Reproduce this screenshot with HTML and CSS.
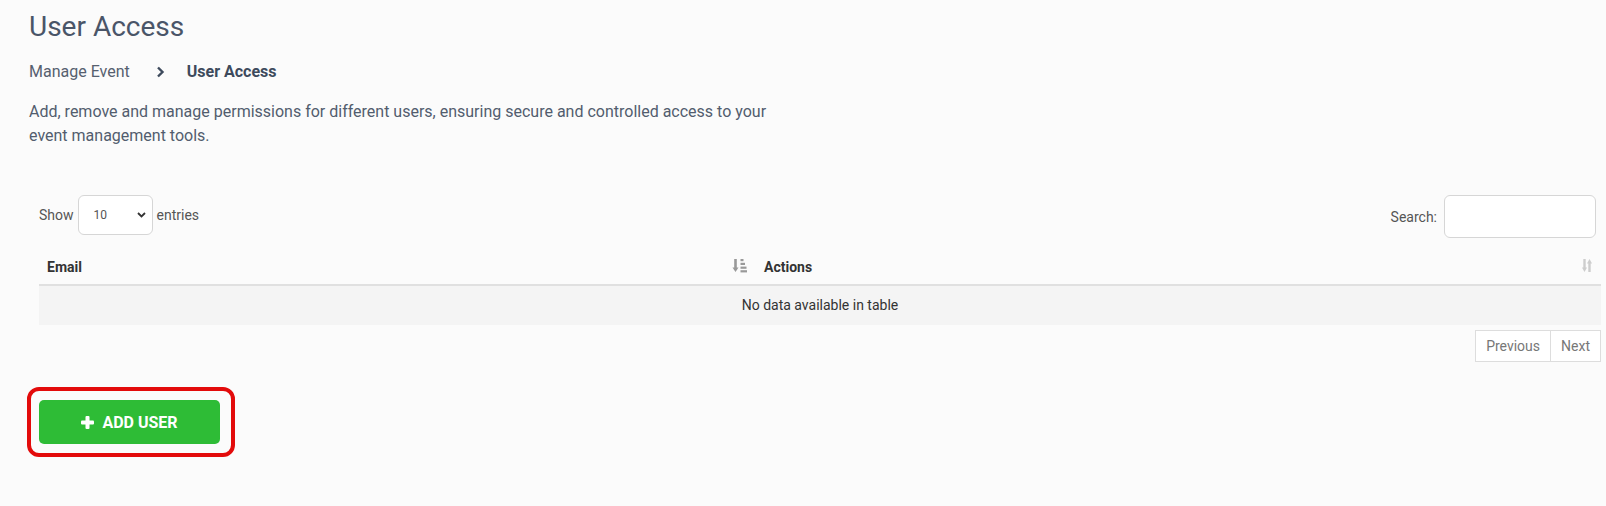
FILE: index.html
```html
<!DOCTYPE html>
<html>

<head>
  <meta charset="UTF-8">
  <title>User Access</title>
  <link rel="stylesheet" href="styles.css">
</head>

<body>
  <div class="page">
    <h1>User Access</h1>

    <div class="breadcrumb">
      <span class="crumb">Manage Event</span>
      <svg class="crumb-sep" width="9" height="12" viewBox="0 0 9 12">
        <path d="M2 1.5 L6.5 6 L2 10.5" fill="none" stroke="#3d4a5c" stroke-width="2.4" />
      </svg>
      <span class="crumb current">User Access</span>
    </div>

    <p class="intro">Add, remove and manage permissions for different users, ensuring secure and controlled access to your event management tools.</p>

    <div class="table-wrap">
      <div class="table-top">
        <label class="length">Show
          <span class="select-box">10
            <svg width="9" height="6" viewBox="0 0 9 6">
              <path d="M1 1 L4.5 4.5 L8 1" fill="none" stroke="#333" stroke-width="1.8" />
            </svg>
          </span>
          entries</label>
        <label class="search">Search: <input type="text"></label>
      </div>

      <table class="data">
        <thead>
          <tr>
            <th class="col-email">Email
              <svg class="sort" width="15" height="15" viewBox="0 0 15 15">
                <path d="M3.5 1 V12" stroke="#999" stroke-width="2.6" />
                <path d="M0.5 9.5 L3.5 14 L6.5 9.5 Z" fill="#999" />
                <rect x="8.5" y="1" width="3" height="2.2" fill="#999" />
                <rect x="8.5" y="4.8" width="4.5" height="2.2" fill="#999" />
                <rect x="8.5" y="8.6" width="6" height="2.2" fill="#999" />
                <rect x="8.5" y="12.2" width="6.5" height="2.2" fill="#999" />
              </svg>
            </th>
            <th>Actions
              <svg class="sort" width="10" height="15" viewBox="0 0 10 15">
                <path d="M2.5 1 V11" stroke="#cdcdcd" stroke-width="2.4" />
                <path d="M0 9.5 L2.5 14 L5 9.5 Z" fill="#cdcdcd" />
                <path d="M7.5 4 V14" stroke="#cdcdcd" stroke-width="2.4" />
                <path d="M5 5.5 L7.5 1 L10 5.5 Z" fill="#cdcdcd" />
              </svg>
            </th>
          </tr>
        </thead>
        <tbody>
          <tr>
            <td colspan="2" class="empty">No data available in table</td>
          </tr>
        </tbody>
      </table>

      <div class="paging">
        <button class="page-btn">Previous</button>
        <button class="page-btn">Next</button>
      </div>
    </div>

    <div class="highlight">
      <button class="add-btn">
        <svg width="13" height="13" viewBox="0 0 13 13">
          <rect x="4.5" y="0" width="4" height="13" rx="1" fill="#fff" />
          <rect x="0" y="4.5" width="13" height="4" rx="1" fill="#fff" />
        </svg>
        ADD USER
      </button>
    </div>
  </div>
</body>

</html>
```

FILE: styles.css
```css
body {
  margin: 0;
  background: #fbfbfb;
  font-family: Roboto, "Liberation Sans", sans-serif;
  color: #4a5568;
}

.page {
  padding: 0 5px 40px 29px;
}

h1 {
  margin: 10px 0 0;
  font-size: 28px;
  line-height: 34px;
  font-weight: 400;
  color: #4a5568;
}

.breadcrumb {
  display: flex;
  align-items: center;
  margin-top: 17px;
  font-size: 16px;
  line-height: 22px;
}

.crumb {
  color: #56606f;
}

.crumb.current {
  color: #3d4a5c;
  font-weight: 700;
}

.crumb-sep {
  margin: 0 22px 0 26px;
}

.intro {
  margin: 17px 0 0;
  max-width: 760px;
  font-size: 16px;
  line-height: 24px;
  color: #525d6e;
}

.table-wrap {
  margin: 47px 0 0 10px;
  font-size: 14px;
  color: #333;
}

.table-top {
  display: flex;
  justify-content: space-between;
  align-items: flex-start;
}

.length {
  display: flex;
  align-items: center;
  gap: 4px;
  color: #555;
}

.select-box {
  display: flex;
  align-items: center;
  justify-content: space-between;
  width: 75px;
  height: 40px;
  padding: 0 6px 0 15px;
  box-sizing: border-box;
  border: 1px solid #d6d6d6;
  border-radius: 6px;
  background: #fff;
  font-size: 12px;
  color: #555;
}

.search {
  display: flex;
  align-items: center;
  gap: 7px;
  margin-right: 5px;
  color: #555;
}

.search input {
  width: 152px;
  height: 43px;
  box-sizing: border-box;
  border: 1px solid #d6d6d6;
  border-radius: 6px;
  background: #fff;
}

.data {
  width: 100%;
  margin-top: 6px;
  border-collapse: collapse;
}

.data th {
  position: relative;
  padding: 13px 10px 7px 8px;
  line-height: 20px;
  text-align: left;
  font-weight: 700;
  color: #333;
  border-bottom: 2px solid #e0e0e0;
}

.col-email {
  width: 699px;
}

.sort {
  position: absolute;
  right: 9px;
  top: 14px;
}

.empty {
  padding: 9px 8px;
  line-height: 21px;
  text-align: center;
  background: #f4f4f4;
  color: #333;
}

.paging {
  display: flex;
  justify-content: flex-end;
  margin-top: 5px;
}

.page-btn {
  padding: 5px 10px;
  font-family: Roboto, "Liberation Sans", sans-serif;
  font-size: 14px;
  line-height: 20px;
  color: #777;
  background: #fff;
  border: 1px solid #ddd;
  cursor: pointer;
}

.page-btn + .page-btn {
  border-left: none;
}

.highlight {
  display: inline-block;
  margin: 25px 0 0 -2px;
  padding: 9px 11px 9px 8px;
  border: 4px solid #e30b0b;
  border-radius: 12px;
}

.add-btn {
  display: flex;
  align-items: center;
  justify-content: center;
  gap: 8px;
  width: 181px;
  height: 44px;
  background: #2ebc36;
  color: #fff;
  border: none;
  border-radius: 5px;
  font-family: Roboto, "Liberation Sans", sans-serif;
  font-size: 16px;
  font-weight: 700;
  cursor: pointer;
}
```
